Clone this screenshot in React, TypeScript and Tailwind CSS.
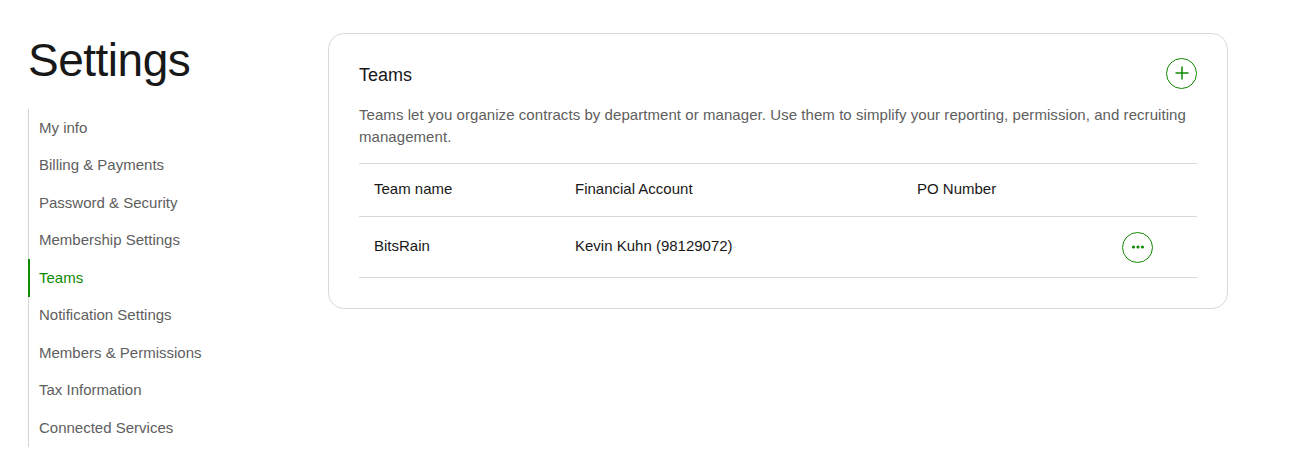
import React from "react";

const nav = [
  "My info",
  "Billing & Payments",
  "Password & Security",
  "Membership Settings",
  "Teams",
  "Notification Settings",
  "Members & Permissions",
  "Tax Information",
  "Connected Services",
];

export default function App() {
  return (
    <div
      className="w-[1291px] h-[461px] bg-white flex text-[#181818]"
      style={{ fontFamily: "'Liberation Sans', Arial, sans-serif" }}
    >
      <aside className="w-[300px] pl-[28px] pt-[32px] shrink-0">
        <h1 className="text-[46px] leading-[56px] font-normal tracking-[-0.5px] text-[#181818]">
          Settings
        </h1>
        <nav className="mt-[21px] border-l border-[#d5d5d5] flex flex-col">
          {nav.map((n) => (
            <div
              key={n}
              className={
                n === "Teams"
                  ? "h-[37.5px] flex items-center pl-[9px] -ml-px border-l-2 border-[#108a00] text-[#108a00] text-[15px]"
                  : "h-[37.5px] flex items-center pl-[10px] text-[#5e5e5e] text-[15px]"
              }
            >
              {n}
            </div>
          ))}
        </nav>
      </aside>
      <main className="pt-[33px] pl-[28px]">
        <section className="w-[900px] border border-[#d9d9d9] rounded-[16px] px-[30px] pt-[24px] pb-[30px]">
          <div className="flex items-center justify-between h-[34px]">
            <h2 className="text-[18px] font-normal">Teams</h2>
            <button className="w-[31px] h-[31px] mb-[4px] rounded-full border border-[#108a00] flex items-center justify-center">
              <svg width="16" height="16" viewBox="0 0 16 16" fill="none" stroke="#108a00" strokeWidth="1.5">
                <path d="M8 1.5v13M1.5 8h13" />
              </svg>
            </button>
          </div>
          <p className="mt-[12px] text-[15px] leading-[22px] text-[#5e5e5e] tracking-[0.06px]">
            Teams let you organize contracts by department or manager. Use them to simplify your reporting, permission, and recruiting management.
          </p>
          <div className="mt-[15px] border-t border-[#d9d9d9]">
            <div className="h-[53px] flex items-center border-b border-[#d9d9d9] text-[15px] pb-[2px]">
              <div className="w-[216px] pl-[15px]">Team name</div>
              <div className="w-[342px]">Financial Account</div>
              <div className="flex-1">PO Number</div>
            </div>
            <div className="h-[61px] flex items-center border-b border-[#d9d9d9] text-[15px]">
              <div className="w-[216px] pl-[15px] pb-[2px]">BitsRain</div>
              <div className="w-[342px] pb-[2px]">Kevin Kuhn (98129072)</div>
              <div className="flex-1"></div>
              <button className="w-[31px] h-[31px] rounded-full border border-[#108a00] flex items-center justify-center mr-[44px]">
                <svg width="14" height="4" viewBox="0 0 14 4" fill="#108a00">
                  <circle cx="2.5" cy="2" r="1.6" />
                  <circle cx="7" cy="2" r="1.6" />
                  <circle cx="11.5" cy="2" r="1.6" />
                </svg>
              </button>
            </div>
          </div>
        </section>
      </main>
    </div>
  );
}
